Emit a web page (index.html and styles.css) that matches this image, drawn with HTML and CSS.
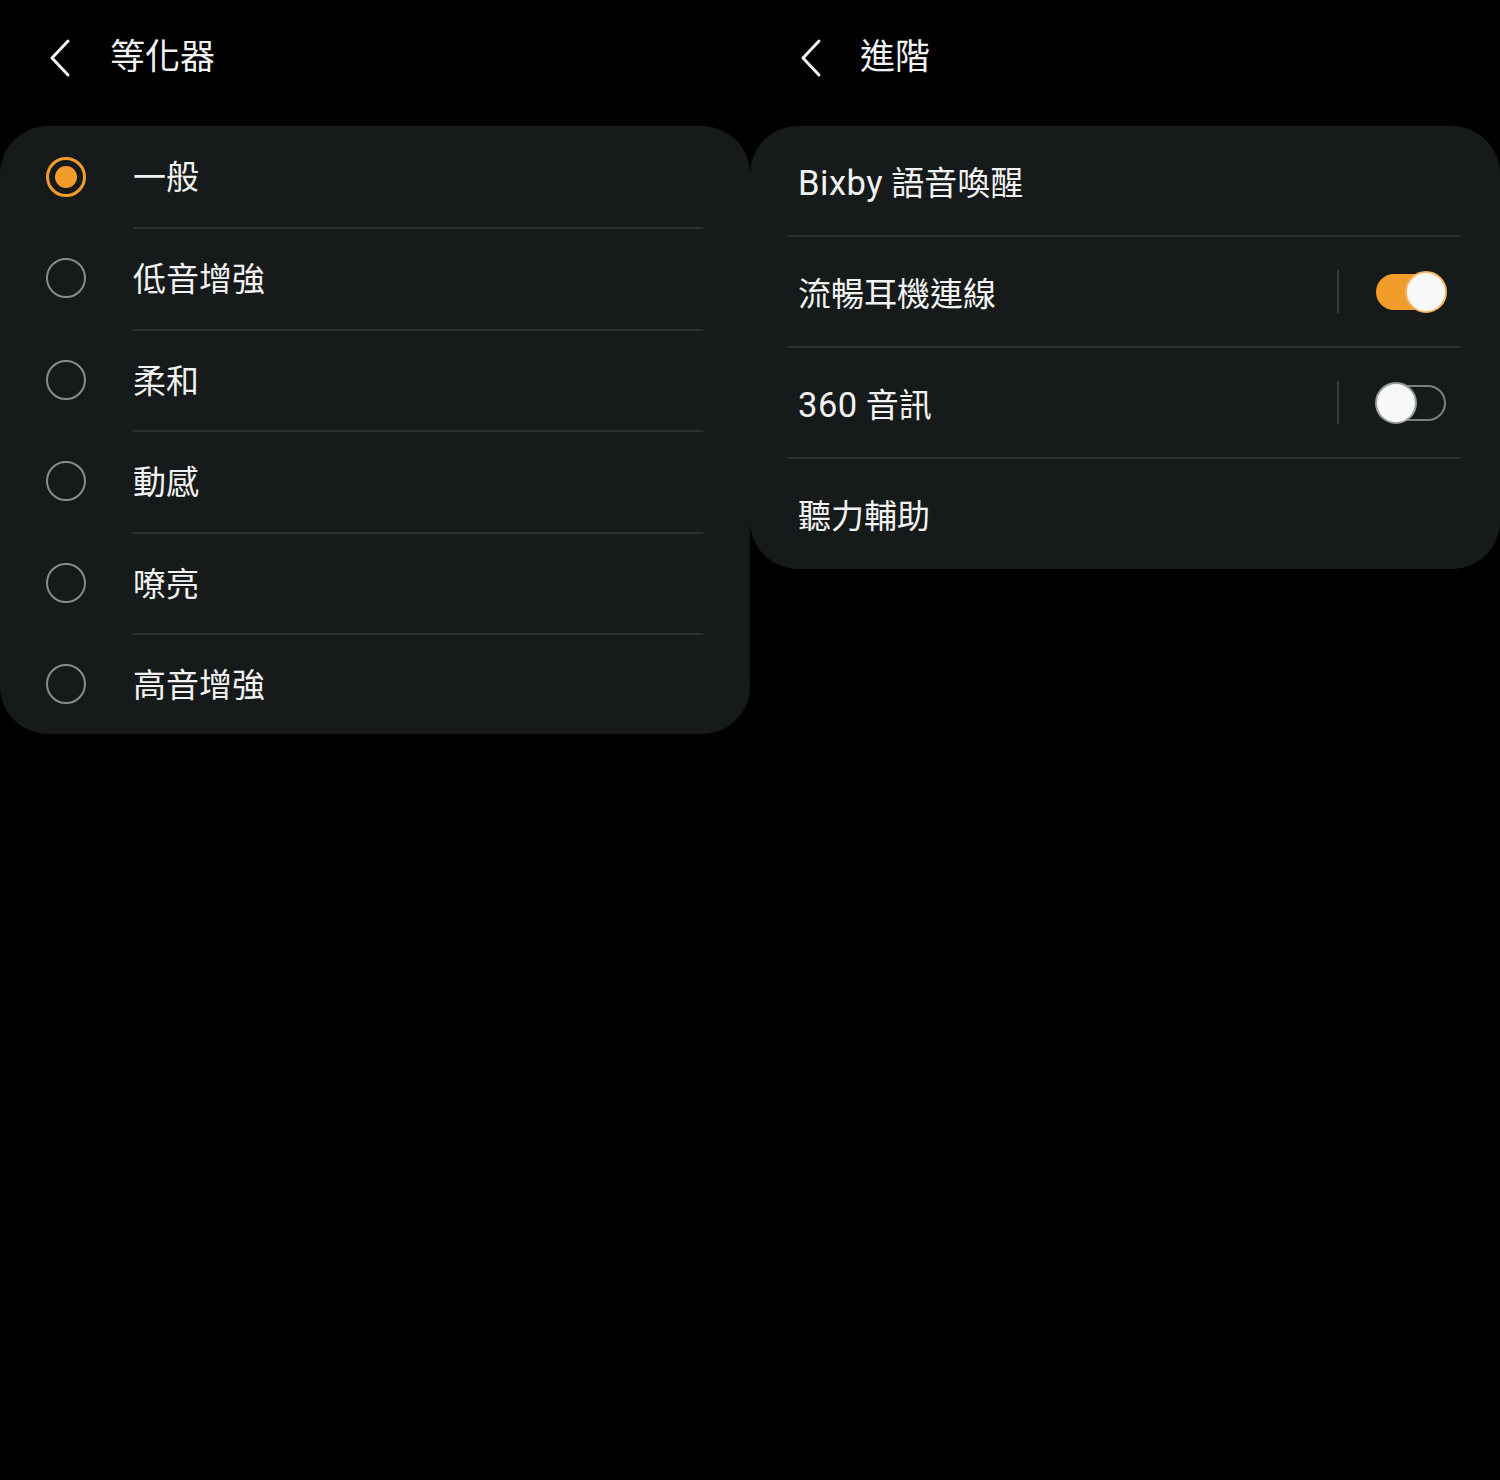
FILE: index.html
```html
<!DOCTYPE html>
<html lang="zh-Hant">
  <head>
    <meta charset="UTF-8" />
    <meta name="viewport" content="width=device-width, initial-scale=1.0" />
    <title>等化器 / 進階</title>
    <link rel="stylesheet" href="styles.css">
  </head>
  <body>
    <div class="screen">
      <!-- 等化器 -->
      <div class="pane">
        <div class="header">
          <svg class="back" width="24" height="40" viewBox="0 0 24 40">
            <path d="M20 3 L4 20 L20 37" fill="none" stroke="#f4f4f4" stroke-width="3" stroke-linecap="round" stroke-linejoin="round" />
          </svg>
          <span class="title">等化器</span>
        </div>
        <div class="card eq">
          <div class="eq-row">
            <span class="radio checked"></span>
            <span class="eq-label">一般</span>
          </div>
          <div class="eq-row">
            <span class="radio"></span>
            <span class="eq-label">低音增強</span>
          </div>
          <div class="eq-row">
            <span class="radio"></span>
            <span class="eq-label">柔和</span>
          </div>
          <div class="eq-row">
            <span class="radio"></span>
            <span class="eq-label">動感</span>
          </div>
          <div class="eq-row">
            <span class="radio"></span>
            <span class="eq-label">嘹亮</span>
          </div>
          <div class="eq-row">
            <span class="radio"></span>
            <span class="eq-label">高音增強</span>
          </div>
        </div>
      </div>

      <!-- 進階 -->
      <div class="pane">
        <div class="header">
          <svg class="back" width="24" height="40" viewBox="0 0 24 40">
            <path d="M20 3 L4 20 L20 37" fill="none" stroke="#f4f4f4" stroke-width="3" stroke-linecap="round" stroke-linejoin="round" />
          </svg>
          <span class="title">進階</span>
        </div>
        <div class="card adv">
          <div class="adv-row">
            <span class="adv-label"><span class="latin">Bixby</span> 語音喚醒</span>
          </div>
          <div class="adv-row">
            <span class="adv-label">流暢耳機連線</span>
            <span class="sep"></span>
            <span class="switch on"><span class="thumb"></span></span>
          </div>
          <div class="adv-row">
            <span class="adv-label"><span class="latin">360</span> 音訊</span>
            <span class="sep"></span>
            <span class="switch"><span class="thumb"></span></span>
          </div>
          <div class="adv-row">
            <span class="adv-label">聽力輔助</span>
          </div>
        </div>
      </div>
    </div>
  </body>
</html>
```

FILE: styles.css
```css
body {
  margin: 0;
  background-color: #000;
  color: #f2f2f2;
  font-family: "Roboto", "Noto Sans CJK TC", sans-serif;
}
.screen {
  display: flex;
  width: 1500px;
  height: 1480px;
}
.pane {
  width: 750px;
}
.header {
  height: 126px;
  display: flex;
  align-items: flex-start;
  padding-top: 38px;
  box-sizing: border-box;
}
.back {
  margin-left: 48px;
  margin-right: 38px;
}
.title {
  font-size: 35px;
  line-height: 40px;
}
.pane:last-child .back {
  margin-left: 49px;
  margin-right: 37px;
}
.card {
  background-color: #161a1a;
  border-radius: 48px;
}

/* 等化器 list */
.eq-row {
  display: flex;
  align-items: stretch;
  height: 101.4px;
}
.radio {
  width: 36px;
  height: 36px;
  margin: 31px 47px 0 46px;
  border: 2px solid #8a8c8c;
  border-radius: 50%;
  box-sizing: content-box;
  position: relative;
}
.radio.checked {
  border: 3px solid #f29c2b;
  width: 34px;
  height: 34px;
}
.radio.checked::after {
  content: "";
  position: absolute;
  left: 6px;
  top: 6px;
  width: 22px;
  height: 22px;
  border-radius: 50%;
  background-color: #f29c2b;
}
.eq-label {
  flex: 1;
  margin-right: 47px;
  font-size: 33px;
  line-height: 106px;
  border-bottom: 2px solid #2c3030;
  box-sizing: border-box;
  height: 103.4px;
  margin-bottom: -2px;
}
.eq-row:first-child .eq-label {
  line-height: 104px;
}
.eq-row:last-child .eq-label {
  border-bottom: none;
}

/* 進階 list */
.adv-row {
  display: flex;
  align-items: center;
  height: 111px;
  margin: 0 39px 0 37px;
  padding: 0 15px 0 11px;
  border-bottom: 2px solid #2c3030;
  box-sizing: border-box;
}
.adv-row:last-child {
  border-bottom: none;
  height: 110px;
}
.adv-label {
  flex: 1;
  font-size: 33px;
}
.latin {
  font-size: 34.5px;
  letter-spacing: 0.5px;
}
.sep {
  width: 2px;
  height: 43px;
  background-color: #383c3c;
  margin-right: 37px;
  margin-left: -2px;
}
.switch {
  position: relative;
  width: 70px;
  height: 36px;
  border-radius: 18px;
  border: 2px solid #7e8080;
  box-sizing: border-box;
}
.switch.on {
  background-color: #f29c2b;
  border-color: #f29c2b;
}
.thumb {
  position: absolute;
  top: -5px;
  left: -3px;
  width: 42px;
  height: 42px;
  border-radius: 50%;
  background-color: #f7f8f8;
  box-sizing: border-box;
  border: 2px solid #9a9c9c;
}
.switch.on .thumb {
  left: auto;
  right: -3px;
  border-color: #f5b860;
}
```
